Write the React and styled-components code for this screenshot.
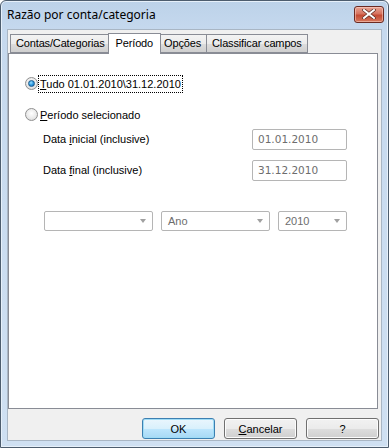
import React from "react";
import styled, { createGlobalStyle } from "styled-components";

const Global = createGlobalStyle`
  html, body { margin: 0; padding: 0; background: #fff; }
  body { font-family: "Liberation Sans", Arial, sans-serif; font-size: 11px; }
`;

const Window = styled.div`
  width: 389px;
  height: 448px;
  box-sizing: border-box;
  border: 1px solid #4d5d6e;
  border-radius: 6px 6px 0 0;
  background: linear-gradient(#bcd2e9 0px, #c6d9ee 30px, #cfe0f2 100%);
  box-shadow: inset 0 0 0 1px #e6f0fa;
  display: flex;
  flex-direction: column;
  padding: 0 6px 6px 6px;
  overflow: hidden;
`;

const TitleBar = styled.div`
  height: 28px;
  display: flex;
  align-items: center;
  justify-content: space-between;
  flex-shrink: 0;
`;

const Title = styled.span`
  font-family: "Noto Sans", "Open Sans", sans-serif;
  font-size: 12px;
  color: #000;
  margin-top: -1px;
`;

const CloseBtn = styled.div`
  width: 30px;
  height: 17px;
  box-sizing: border-box;
  margin-top: -2px;
  margin-right: -2px;
  border: 1px solid #6b2a22;
  border-radius: 3px;
  background: linear-gradient(#e7a494 0%, #d6735f 45%, #c44a33 55%, #d5785e 100%);
  box-shadow: inset 0 0 0 1px rgba(255, 220, 210, 0.5);
  display: flex;
  align-items: center;
  justify-content: center;
`;

const Client = styled.div`
  flex: 1;
  background: #f0f0f0;
  border: 1px solid #a9b6c4;
  display: flex;
  flex-direction: column;
  padding: 2px 2px 0 0;
`;

const TabRow = styled.div`
  display: flex;
  align-items: flex-end;
  height: 21px;
  padding-left: 2px;
  position: relative;
  z-index: 1;
`;

const Tab = styled.div`
  box-sizing: border-box;
  height: ${(p) => (p.$active ? "21px" : "19px")};
  margin: ${(p) => (p.$active ? "0 -2px -1px -3px" : "0 0 0 -1px")};
  padding: ${(p) => (p.$active ? "3px 7px 0 7px" : "2px 5px 0 5px")};
  border: 1px solid #898c95;
  border-bottom: ${(p) => (p.$active ? "none" : "1px solid #898c95")};
  background: ${(p) =>
    p.$active ? "#fff" : "linear-gradient(#f3f3f3 0%, #ebebeb 50%, #dddddd 51%, #cfcfcf 100%)"};
  color: #000;
  font-size: 11px;
  letter-spacing: -0.15px;
  white-space: nowrap;
  position: relative;
  z-index: ${(p) => (p.$active ? 2 : 1)};
  &:first-child { margin-left: 0; }
`;

const Panel = styled.div`
  box-sizing: border-box;
  width: 370px;
  height: 356px;
  background: #fff;
  border: 1px solid #898c95;
  display: flex;
  flex-direction: column;
  padding: 21px 0 0 16px;
`;

const RadioRow = styled.label`
  display: flex;
  align-items: center;
  height: 17px;
  margin-bottom: ${(p) => p.$mb || 0}px;
  color: #000;
`;

const RadioCircle = styled.span`
  width: 13px;
  height: 13px;
  box-sizing: border-box;
  border-radius: 50%;
  border: 1px solid #8f8f8f;
  background: radial-gradient(circle at 50% 40%, #ffffff 0%, #e8e8e8 60%, #d0d0d0 100%);
  display: flex;
  align-items: center;
  justify-content: center;
  flex-shrink: 0;
  margin-right: 1px;
  &::after {
    content: "";
    display: ${(p) => (p.$checked ? "block" : "none")};
    width: 5px;
    height: 5px;
    border-radius: 50%;
    border: 1px solid #1c5a8a;
    background: radial-gradient(circle at 40% 35%, #9be0ff 0%, #2e9ae0 50%, #1766b0 100%);
  }
`;

const RadioText = styled.span`
  padding: 1px 1px;
  outline: ${(p) => (p.$focus ? "1px dotted #000" : "none")};
  outline-offset: 0;
  line-height: 14px;
`;

const FieldRow = styled.div`
  display: flex;
  align-items: center;
  height: 20px;
  margin-bottom: ${(p) => p.$mb || 0}px;
  padding-left: 18px;
`;

const FieldLabel = styled.span`
  width: 209px;
  color: #000;
`;

const TextBox = styled.div`
  width: 95px;
  height: 21px;
  box-sizing: border-box;
  border: 1px solid #b5b5b5;
  border-radius: 2px;
  background: #fff;
  color: #6d6d6d;
  display: flex;
  align-items: center;
  padding-left: 5px;
  font-family: "DejaVu Sans", sans-serif;
  font-size: 10.5px;
`;

const SelectRow = styled.div`
  display: flex;
  gap: 8px;
  padding-left: 19px;
  margin-top: 31px;
`;

const Select = styled.div`
  width: ${(p) => p.$w}px;
  height: 20px;
  box-sizing: border-box;
  border: 1px solid #b5b5b5;
  border-radius: 2px;
  background: #fff;
  color: #6d6d6d;
  display: flex;
  align-items: center;
  justify-content: space-between;
  padding: 0 6px 0 6px;
`;

const Arrow = styled.span`
  width: 0;
  height: 0;
  border-left: 3.5px solid transparent;
  border-right: 3.5px solid transparent;
  border-top: 4px solid #a0a0a0;
`;

const ButtonRow = styled.div`
  display: flex;
  justify-content: flex-end;
  gap: 9px;
  padding: 9px 0 0 0;
`;

const Button = styled.div`
  width: 73px;
  height: 21px;
  box-sizing: border-box;
  border-radius: 3px;
  border: 1px solid ${(p) => (p.$primary ? "#3c7fb1" : "#707070")};
  background: ${(p) =>
    p.$primary
      ? "linear-gradient(#eaf6fd 0%, #d9f0fc 50%, #bee6fd 51%, #a7d9f5 100%)"
      : "linear-gradient(#f2f2f2 0%, #ebebeb 50%, #dddddd 51%, #cfcfcf 100%)"};
  box-shadow: inset 0 0 0 1px ${(p) => (p.$primary ? "#9fdcf6" : "#fcfcfc")};
  display: flex;
  align-items: center;
  justify-content: center;
  color: #000;
`;

const U = styled.span`
  text-decoration: underline;
`;

export default function App() {
  return (
    <>
      <Global />
      <Window>
        <TitleBar>
          <Title>Razão por conta/categoria</Title>
          <CloseBtn>
            <svg width="14" height="10" viewBox="0 0 14 10">
              <path d="M2 1 L12 9 M12 1 L2 9" stroke="#5a2a20" strokeWidth="3.4" strokeLinecap="square" />
              <path d="M2 1 L12 9 M12 1 L2 9" stroke="#ffffff" strokeWidth="2" strokeLinecap="square" />
            </svg>
          </CloseBtn>
        </TitleBar>
        <Client>
          <TabRow>
            <Tab>Contas/Categorias</Tab>
            <Tab $active>Período</Tab>
            <Tab>Opções</Tab>
            <Tab>Classificar campos</Tab>
          </TabRow>
          <Panel>
            <RadioRow $mb={14}>
              <RadioCircle $checked />
              <RadioText $focus>
                <U>T</U>udo 01.01.2010\31.12.2010
              </RadioText>
            </RadioRow>
            <RadioRow $mb={6}>
              <RadioCircle />
              <RadioText>
                <U>P</U>eríodo selecionado
              </RadioText>
            </RadioRow>
            <FieldRow $mb={11}>
              <FieldLabel>
                Data <U>i</U>nicial (inclusive)
              </FieldLabel>
              <TextBox>01.01.2010</TextBox>
            </FieldRow>
            <FieldRow>
              <FieldLabel>
                Data <U>f</U>inal (inclusive)
              </FieldLabel>
              <TextBox>31.12.2010</TextBox>
            </FieldRow>
            <SelectRow>
              <Select $w={109}>
                <span />
                <Arrow />
              </Select>
              <Select $w={109}>
                <span>Ano</span>
                <Arrow />
              </Select>
              <Select $w={69}>
                <span>2010</span>
                <Arrow />
              </Select>
            </SelectRow>
          </Panel>
          <ButtonRow>
            <Button $primary>OK</Button>
            <Button>
              <span>
                <U>C</U>ancelar
              </span>
            </Button>
            <Button>?</Button>
          </ButtonRow>
        </Client>
      </Window>
    </>
  );
}
